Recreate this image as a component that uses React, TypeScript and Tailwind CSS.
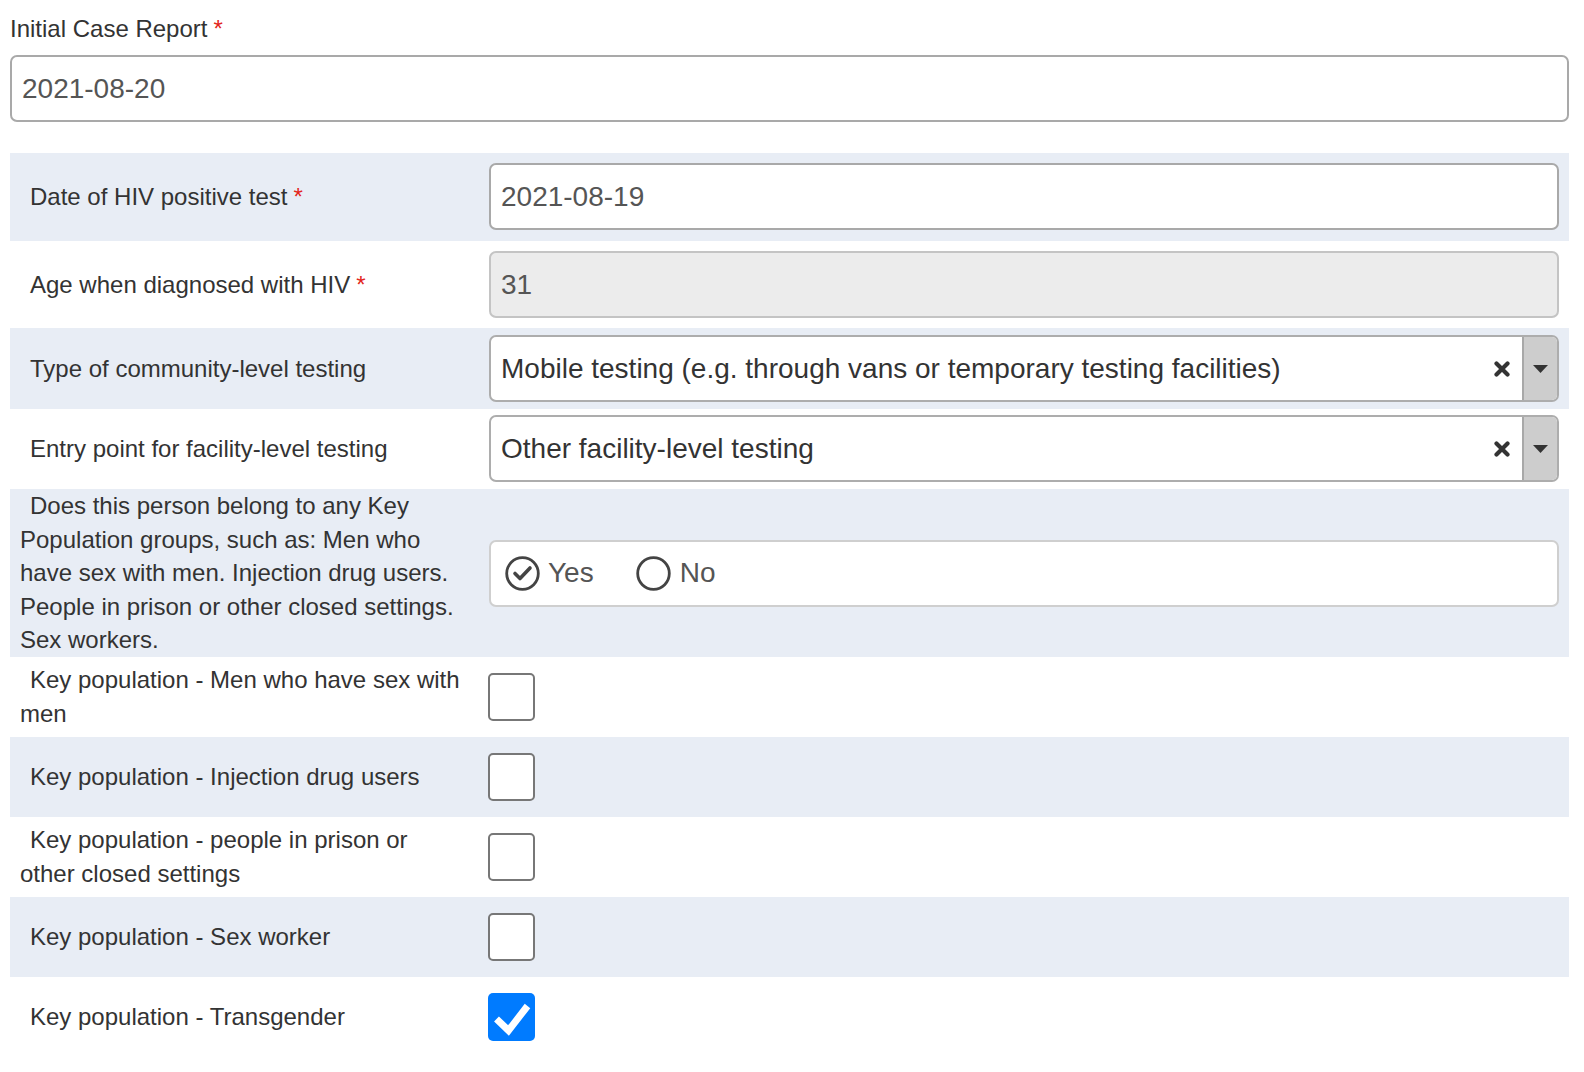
import React from "react";

const rowBg = "bg-[#e8edf5]";

function Req() {
  return <span className="text-[#e3261c] ml-[6px]">*</span>;
}

function Label({ children }: { children: React.ReactNode }) {
  return (
    <div className="w-[469px] shrink-0 pl-[10px] pr-[16px] leading-[33.6px] indent-[10px] text-[24px] text-[#333]">
      {children}
    </div>
  );
}

function TextBox({ value, disabled }: { value: string; disabled?: boolean }) {
  return (
    <div
      className={
        "h-[67px] rounded-[7px] border-2 border-[#a9a9a9] px-[10px] flex items-center text-[28px] text-[#555] " +
        (disabled ? "bg-[#ececec] border-[#c4c4c4]" : "bg-white")
      }
    >
      {value}
    </div>
  );
}

function SelectBox({ value }: { value: string }) {
  return (
    <div className="h-[67px] rounded-[7px] border-2 border-[#adadad] bg-white flex items-stretch overflow-hidden">
      <div className="flex-1 flex items-center pl-[10px] text-[28px] text-[#333] whitespace-nowrap overflow-hidden">
        {value}
      </div>
      <div className="w-[40px] flex items-center justify-center">
        <svg width="16" height="16" viewBox="0 0 16 16">
          <path d="M2.5 2.5 L13.5 13.5 M13.5 2.5 L2.5 13.5" stroke="#333" strokeWidth="4.2" strokeLinecap="round" />
        </svg>
      </div>
      <div className="w-[35px] bg-[#cdcdcd] border-l-2 border-[#a8a8a8] flex items-center justify-center">
        <svg width="15" height="8" viewBox="0 0 15 8">
          <path d="M0 0 L15 0 L7.5 8 Z" fill="#333" />
        </svg>
      </div>
    </div>
  );
}

function Checkbox({ checked }: { checked?: boolean }) {
  if (checked) {
    return (
      <div className="w-[47px] h-[48px] -ml-[1px] rounded-[5px] bg-[#007bff] flex items-center justify-center">
        <svg width="47" height="48" viewBox="0 0 47 48">
          <path d="M8.5 26 L20.5 37.5 L39.5 13" stroke="#fff" strokeWidth="7" fill="none" strokeLinejoin="miter" />
        </svg>
      </div>
    );
  }
  return <div className="w-[47px] h-[48px] -ml-[1px] rounded-[5px] border-2 border-[#777] bg-white" />;
}

function Row({
  shaded,
  label,
  children,
  cls,
}: {
  shaded?: boolean;
  label: React.ReactNode;
  children: React.ReactNode;
  cls: string;
}) {
  return (
    <div className={"flex items-center " + (shaded ? rowBg : "bg-white") + " " + cls}>
      <Label>{label}</Label>
      <div className="flex-1 pl-[10px] pr-[10px]">{children}</div>
    </div>
  );
}

export default function App() {
  return (
    <div className="min-h-screen bg-white font-['Liberation_Sans',Arial,sans-serif] pl-[10px] pr-[15px] pt-[12px]">
      <div className="leading-[34px] text-[24px] text-[#333]">
        Initial Case Report<Req />
      </div>
      <div className="mt-[9px]">
        <TextBox value="2021-08-20" />
      </div>

      <div className="mt-[31px]">
        <Row shaded cls="pt-[10px] pb-[11px]" label={<>Date of HIV positive test<Req /></>}>
          <TextBox value="2021-08-19" />
        </Row>
        <Row cls="pt-[10px] pb-[10px]" label={<>Age when diagnosed with HIV<Req /></>}>
          <TextBox value="31" disabled />
        </Row>
        <Row shaded cls="pt-[7px] pb-[7px]" label="Type of community-level testing">
          <SelectBox value="Mobile testing (e.g. through vans or temporary testing facilities)" />
        </Row>
        <Row cls="pt-[6px] pb-[7px]" label="Entry point for facility-level testing">
          <SelectBox value="Other facility-level testing" />
        </Row>
        <Row
          shaded
          cls="h-[168px]"
          label="Does this person belong to any Key Population groups, such as: Men who have sex with men. Injection drug users. People in prison or other closed settings. Sex workers."
        >
          <div className="h-[67px] rounded-[7px] border-2 border-[#cfcfcf] bg-white flex items-center pl-[14px] text-[28px] text-[#555]">
            <svg width="35" height="35" viewBox="0 0 35 35">
              <circle cx="17.5" cy="17.5" r="15.8" stroke="#444" strokeWidth="2.8" fill="none" />
              <path d="M10 17.5 L15 22.5 L25 12" stroke="#444" strokeWidth="3.6" fill="none" strokeLinecap="round" strokeLinejoin="round" />
            </svg>
            <span className="ml-[8px]">Yes</span>
            <svg width="35" height="35" viewBox="0 0 35 35" className="ml-[42px]">
              <circle cx="17.5" cy="17.5" r="15.8" stroke="#444" strokeWidth="2.8" fill="none" />
            </svg>
            <span className="ml-[9px]">No</span>
          </div>
        </Row>
        <Row cls="h-[80px]" label="Key population - Men who have sex with men">
          <Checkbox />
        </Row>
        <Row shaded cls="h-[80px]" label="Key population - Injection drug users">
          <Checkbox />
        </Row>
        <Row cls="h-[80px]" label="Key population - people in prison or other closed settings">
          <Checkbox />
        </Row>
        <Row shaded cls="h-[80px]" label="Key population - Sex worker">
          <Checkbox />
        </Row>
        <Row cls="h-[80px]" label="Key population - Transgender">
          <Checkbox checked />
        </Row>
      </div>
    </div>
  );
}
